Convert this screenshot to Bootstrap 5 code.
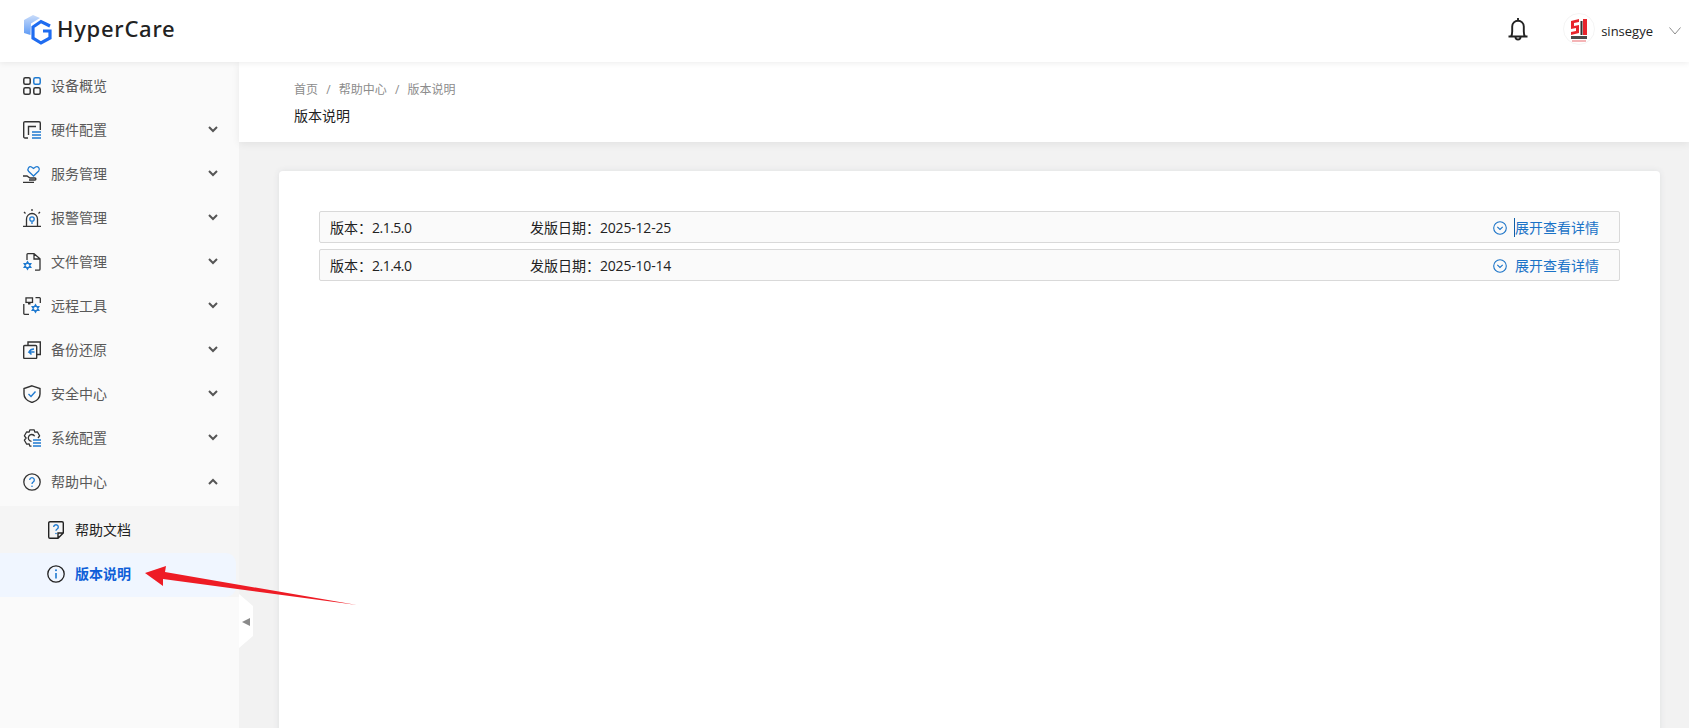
<!DOCTYPE html>
<html lang="zh-CN">
<head>
<meta charset="utf-8">
<title>版本说明</title>
<link href="https://cdn.jsdelivr.net/npm/bootstrap@5.3.0/dist/css/bootstrap.min.css" rel="stylesheet">
<style>
html,body{height:100%;overflow:hidden}
body{font-family:"Open Sans","Noto Sans CJK SC",sans-serif;font-size:14px;color:#222;background:#f2f2f2}
.top-bar{height:62px;padding:0 0 4px 23px;background:#fff;box-shadow:0 1px 6px rgba(0,0,0,.08);position:relative;z-index:3;flex-wrap:nowrap}
.brand-word{font-family:"Noto Sans",sans-serif;font-size:22px;font-weight:500;letter-spacing:.75px;color:#222;margin:0 0 2px 5px;line-height:1}
.bell-wrap{margin-right:35px;line-height:0}
.user-name{font-size:13px;color:#222;margin:4px 16px 0 6px;line-height:1}
.caret-wrap{margin:3px 8px 0 0;line-height:0}
.page-body{height:666px}
.side-menu{width:239px;background:#fafafa;flex:none;padding-top:1.500px}
.menu-row{height:44px;padding:0 21px 0 23px;color:#595959;text-decoration:none}
.menu-label{margin-left:10px;flex:1;line-height:1}
.menu-icon{flex:none;display:block}
.sub-group{background:#f5f5f5;padding-top:3px;margin-top:2.500px}
.sub-row{height:44px;padding:0 0 2px 47px;color:#222;text-decoration:none;border-radius:0 10px 10px 0;margin-right:3px}
.sub-row .menu-label{margin-left:10px}
.sub-row.is-current{background:#f0f6ff;color:#0f5fd8;font-weight:700}
.collapse-tab{position:absolute;left:239px;top:532px;width:14px;height:54px;background:#fff;clip-path:polygon(0 0,100% 22%,100% 78%,0 100%);z-index:2}
.collapse-tab::after{content:"";position:absolute;left:3px;top:24px;border-style:solid;border-width:4px 8px 4px 0;border-color:transparent #8a8a8a transparent transparent}
.crumb-panel{height:80px;background:#fff;padding:19px 0 0 55px;box-shadow:0 2px 8px rgba(0,0,0,.07);position:relative;z-index:1}
.crumb-panel .breadcrumb{font-size:12px;margin:0;line-height:18px;--bs-breadcrumb-divider-color:#8c8c8c;--bs-breadcrumb-item-padding-x:8.200px}
.crumb-panel .breadcrumb-item,.crumb-panel .breadcrumb-item a{color:#8c8c8c;text-decoration:none}
.crumb-title{font-size:14px;line-height:20px;color:#222;margin-top:7px}
.content-zone{padding:29px 29px 0 40px;height:586px;overflow:hidden}
.doc-card{height:700px;border:0;border-radius:4px;box-shadow:0 0 6px rgba(60,70,90,.1);padding:40px}
.version-row{height:32px;margin-bottom:6px;background:#fafafa;border:1px solid #d9d9d9;border-radius:2px;padding:1px 20px 0 10px;line-height:1}
.version-num{width:200px}
.ver-digits{letter-spacing:-.5px}
.date-digits{letter-spacing:-.2px}
.detail-link{color:#1a73c7;text-decoration:none;line-height:1}
.detail-link svg{margin-right:8px}
.text-cursor{width:1px;height:19px;background:#0f5fa8;margin-left:-1px}
.shot-arrow{position:absolute;left:0;top:0;z-index:5;pointer-events:none}
</style>
</head>
<body>
<nav class="navbar top-bar d-flex justify-content-between align-items-center">
  <div class="d-flex align-items-center">
    <svg width="29" height="31" viewBox="0 0 29 31" class="menu-icon">
      <defs><linearGradient id="logoFade" x1="0" y1="0" x2="0" y2="1"><stop offset="0" stop-color="#c9dcfa"/><stop offset="1" stop-color="#5f9bf5"/></linearGradient></defs>
      <path d="M1 6 10 1l7 3-9 5.500-.5 11.500-6.500-2z" fill="url(#logoFade)"/>
      <path d="M27 12 18 7.500 10 13V24l8 5 9-5V17H20" fill="none" stroke="#1f6cf0" stroke-width="3.200"/>
    </svg>
    <span class="brand-word">HyperCare</span>
  </div>
  <div class="d-flex align-items-center">
    <div class="bell-wrap">
      <svg width="20" height="24" viewBox="0 0 20 24" fill="none" stroke="#222" stroke-width="1.900">
        <path d="M.5 19.500h19M3 19.500c1-1.500 1.200-3 1.200-5V9.500a5.800 5.800 0 0 1 11.600 0V14.500c0 2 .2 3.500 1.200 5"/>
        <path d="M10 3.500V1M7.500 20a2.500 2.500 0 0 0 5 0"/>
      </svg>
    </div>
    <svg width="32" height="32" viewBox="0 0 32 32" class="menu-icon">
      <circle cx="16" cy="16" r="15.500" fill="#fff" stroke="#f4f4f4"/>
      <path d="M8 8l8-2v3l-5 1v3l5-1v8l-8 2v-3l5-1v-3l-5 1z" fill="#e8242c"/>
      <rect x="17.500" y="8" width="2" height="14" fill="#333"/>
      <rect x="20" y="6" width="4" height="16" fill="#e8242c"/>
      <rect x="8" y="23" width="16" height="3" fill="#4a4a4a"/>
      <rect x="9" y="27.500" width="14" height="1" fill="#ea6a6f"/>
    </svg>
    <span class="user-name">sinsegye</span>
    <div class="caret-wrap">
      <svg width="12" height="8" viewBox="0 0 12 8" fill="none" stroke="#8c8c8c" stroke-width="1"><path d="M.5 .5 6 7 11.500 .5"/></svg>
    </div>
  </div>
</nav>

<div class="d-flex page-body position-relative">
  <aside class="side-menu">
    <a class="menu-row d-flex align-items-center" href="#">
      <svg class="menu-icon" width="18" height="18" viewBox="0 0 18 18" fill="none" stroke-width="1.500"><rect x=".8" y=".8" width="6.400" height="6.400" rx="1.500" stroke="#333"/><rect x="10.800" y=".8" width="6.400" height="6.400" rx="1.500" stroke="#1f7ad0"/><rect x=".8" y="10.800" width="6.400" height="6.400" rx="1.500" stroke="#333"/><rect x="10.800" y="10.800" width="6.400" height="6.400" rx="1.500" stroke="#333"/></svg>
      <span class="menu-label">设备概览</span>
    </a>
    <a class="menu-row d-flex align-items-center" href="#">
      <svg class="menu-icon" width="18" height="18" viewBox="0 0 18 18" fill="none" stroke-width="1.400"><path d="M5 17H2a1.300 1.300 0 0 1-1.300-1.300V2A1.300 1.300 0 0 1 2 .7h14A1.300 1.300 0 0 1 17.300 2v7" stroke="#333"/><path d="M5.500 14V5.500H13" stroke="#333"/><path d="M9 11h9M9 14h9M9 17h9" stroke="#1f7ad0"/></svg>
      <span class="menu-label">硬件配置</span>
      <svg class="menu-icon" width="10" height="7" viewBox="0 0 10 7" fill="none" stroke="#555" stroke-width="2"><path d="M1 1l4 4 4-4"/></svg>
    </a>
    <a class="menu-row d-flex align-items-center" href="#">
      <svg class="menu-icon" width="18" height="18" viewBox="0 0 18 18" fill="none" stroke-width="1.300"><path d="M10.500 11 5.500 6.200C3.800 4 6.200.7 8.500 2l2 1.500L12.500 2c2.500-1.400 5 1.800 3.200 4z" stroke="#1f7ad0"/><path d="M0 11h4l3 2h5c1.200 0 1.200 2 0 2H6M0 17.300h11" stroke="#333"/></svg>
      <span class="menu-label">服务管理</span>
      <svg class="menu-icon" width="10" height="7" viewBox="0 0 10 7" fill="none" stroke="#555" stroke-width="2"><path d="M1 1l4 4 4-4"/></svg>
    </a>
    <a class="menu-row d-flex align-items-center" href="#">
      <svg class="menu-icon" width="18" height="18" viewBox="0 0 18 18" fill="none" stroke-width="1.300"><path d="M3.500 17V10a5.500 5.500 0 0 1 11 0v7M0 17.300h18M9 0v2M1 3l1.500 1.500M17 3l-1.500 1.500" stroke="#333"/><circle cx="9" cy="10" r="2.200" stroke="#1f7ad0"/><path d="M9 12.500V15" stroke="#1f7ad0"/></svg>
      <span class="menu-label">报警管理</span>
      <svg class="menu-icon" width="10" height="7" viewBox="0 0 10 7" fill="none" stroke="#555" stroke-width="2"><path d="M1 1l4 4 4-4"/></svg>
    </a>
    <a class="menu-row d-flex align-items-center" href="#">
      <svg class="menu-icon" width="18" height="18" viewBox="0 0 18 18" fill="none" stroke-width="1.300"><path d="M4 7V1.500A.8.800 0 0 1 4.800.7H11l6 5v10.500a1 1 0 0 1-1 1h-4M11 .7V6h6" stroke="#333"/><path d="M4.500 8.500 8 14.500H1zM4.500 16.500 1 10.500h7z" stroke="#1f7ad0" stroke-width="1.100"/></svg>
      <span class="menu-label">文件管理</span>
      <svg class="menu-icon" width="10" height="7" viewBox="0 0 10 7" fill="none" stroke="#555" stroke-width="2"><path d="M1 1l4 4 4-4"/></svg>
    </a>
    <a class="menu-row d-flex align-items-center" href="#">
      <svg class="menu-icon" width="18" height="18" viewBox="0 0 18 18" fill="none" stroke-width="1.300"><rect x="3" y=".9" width="6.500" height="4.500" stroke="#333"/><path d="M5 5.500h2.500v2H5z" fill="#333"/><path d="M.8 7v9.500a.8.800 0 0 0 .8.800H6M12.500.7h4a.8.800 0 0 1 .8.800V6" stroke="#333"/><path d="M12.500 7.500 16 13.500H9zM12.500 15.500 9 9.500h7z" stroke="#1f7ad0" stroke-width="1.100"/></svg>
      <span class="menu-label">远程工具</span>
      <svg class="menu-icon" width="10" height="7" viewBox="0 0 10 7" fill="none" stroke="#555" stroke-width="2"><path d="M1 1l4 4 4-4"/></svg>
    </a>
    <a class="menu-row d-flex align-items-center" href="#">
      <svg class="menu-icon" width="18" height="18" viewBox="0 0 18 18" fill="none" stroke-width="1.400"><path d="M5 4.500V1h12.300v12.500H14" stroke="#333"/><rect x=".7" y="4.500" width="13" height="13" rx="1" stroke="#333"/><path d="M11 8c-2.500 0-4 1-5 3h5.500M6 11l2.500 2.500" stroke="#1f7ad0" stroke-width="1.600"/></svg>
      <span class="menu-label">备份还原</span>
      <svg class="menu-icon" width="10" height="7" viewBox="0 0 10 7" fill="none" stroke="#555" stroke-width="2"><path d="M1 1l4 4 4-4"/></svg>
    </a>
    <a class="menu-row d-flex align-items-center" href="#">
      <svg class="menu-icon" width="18" height="18" viewBox="0 0 18 18" fill="none" stroke-width="1.400"><path d="M9 .8 17 3.500V9c0 4-3.500 7-8 8.500C4.500 16 1 13 1 9V3.500z" stroke="#333"/><path d="M5.500 9 8 11.500 12.500 6.500" stroke="#1f7ad0"/></svg>
      <span class="menu-label">安全中心</span>
      <svg class="menu-icon" width="10" height="7" viewBox="0 0 10 7" fill="none" stroke="#555" stroke-width="2"><path d="M1 1l4 4 4-4"/></svg>
    </a>
    <a class="menu-row d-flex align-items-center" href="#">
      <svg class="menu-icon" width="18" height="18" viewBox="0 0 18 18" fill="none" stroke-width="1.300"><path d="M8.500 17.200H6.800L6.200 14.800 3.700 15.200 1.400 11.200 3.100 9 1.400 6.800 3.700 2.800 6.200 3.200 6.800.8h4.400l.6 2.400 2.500-.4 2.300 4L15 9" stroke="#333" stroke-linejoin="round"/><path d="M8.500 12.300a3.400 3.400 0 1 1 3.200-5" stroke="#333"/><path d="M10 11h8M10 14h8M10 17h8" stroke="#1f7ad0"/></svg>
      <span class="menu-label">系统配置</span>
      <svg class="menu-icon" width="10" height="7" viewBox="0 0 10 7" fill="none" stroke="#555" stroke-width="2"><path d="M1 1l4 4 4-4"/></svg>
    </a>
    <a class="menu-row d-flex align-items-center" href="#">
      <svg class="menu-icon" width="18" height="18" viewBox="0 0 18 18" fill="none" stroke-width="1.300"><circle cx="9" cy="9" r="8.200" stroke="#333"/><path d="M6.700 7a2.300 2.300 0 1 1 3.500 2c-.8.500-1.200 1-1.200 2" stroke="#1f7ad0"/><circle cx="9" cy="13.200" r=".8" fill="#1f7ad0"/></svg>
      <span class="menu-label">帮助中心</span>
      <svg class="menu-icon" width="10" height="7" viewBox="0 0 10 7" fill="none" stroke="#555" stroke-width="2"><path d="M1 6l4-4 4 4"/></svg>
    </a>
    <div class="sub-group">
      <a class="sub-row d-flex align-items-center" href="#">
        <svg class="menu-icon" width="18" height="18" viewBox="-1 0 18 18" fill="none" stroke-width="1.400"><path d="M10 17.300H2A1.300 1.300 0 0 1 .7 16V2A1.300 1.300 0 0 1 2 .7h12A1.300 1.300 0 0 1 15.300 2v10L10 17.300V12h5.300" stroke="#222"/><path d="M5.700 6a2.300 2.300 0 1 1 3.500 2c-.8.500-1.200.8-1.200 1.800" stroke="#1f7ad0"/><circle cx="8" cy="12.500" r=".8" fill="#1f7ad0"/></svg>
        <span class="menu-label">帮助文档</span>
      </a>
      <a class="sub-row is-current d-flex align-items-center" href="#">
        <svg class="menu-icon" width="18" height="18" viewBox="0 0 18 18" fill="none" stroke-width="1.300"><circle cx="9" cy="9" r="8.200" stroke="#222"/><path d="M9 8v5.500" stroke="#1f7ad0" stroke-width="1.600"/><circle cx="9" cy="5.200" r="1" fill="#1f7ad0"/></svg>
        <span class="menu-label">版本说明</span>
      </a>
    </div>
  </aside>
  <div class="collapse-tab"></div>
  <main class="flex-grow-1">
    <div class="crumb-panel">
      <nav aria-label="breadcrumb">
        <ol class="breadcrumb">
          <li class="breadcrumb-item"><a href="#">首页</a></li>
          <li class="breadcrumb-item"><a href="#">帮助中心</a></li>
          <li class="breadcrumb-item active">版本说明</li>
        </ol>
      </nav>
      <div class="crumb-title">版本说明</div>
    </div>
    <div class="content-zone">
      <div class="card doc-card">
        <div class="version-row d-flex align-items-center">
          <span class="version-num">版本：<span class="ver-digits">2.1.5.0</span></span>
          <span class="flex-grow-1">发版日期：<span class="date-digits">2025-12-25</span></span>
          <a class="detail-link d-flex align-items-center" href="#">
            <svg width="14" height="14" viewBox="0 0 14 14" fill="none" stroke="#1a73c7" stroke-width="1.100"><circle cx="7" cy="7" r="6.300"/><path d="M4.300 5.800 7 8.500 9.700 5.800"/></svg>
            <span class="text-cursor"></span>展开查看详情
          </a>
        </div>
        <div class="version-row d-flex align-items-center">
          <span class="version-num">版本：<span class="ver-digits">2.1.4.0</span></span>
          <span class="flex-grow-1">发版日期：<span class="date-digits">2025-10-14</span></span>
          <a class="detail-link d-flex align-items-center" href="#">
            <svg width="14" height="14" viewBox="0 0 14 14" fill="none" stroke="#1a73c7" stroke-width="1.100"><circle cx="7" cy="7" r="6.300"/><path d="M4.300 5.800 7 8.500 9.700 5.800"/></svg>
            展开查看详情
          </a>
        </div>
      </div>
    </div>
  </main>
</div>

<svg class="shot-arrow" width="400" height="728" viewBox="0 0 400 728">
  <polygon points="145,573 166,566 165,572 357,605 163,579 163,586" fill="#ee1c25"/>
</svg>
<script src="https://cdn.jsdelivr.net/npm/bootstrap@5.3.0/dist/js/bootstrap.bundle.min.js"></script>
</body>
</html>
